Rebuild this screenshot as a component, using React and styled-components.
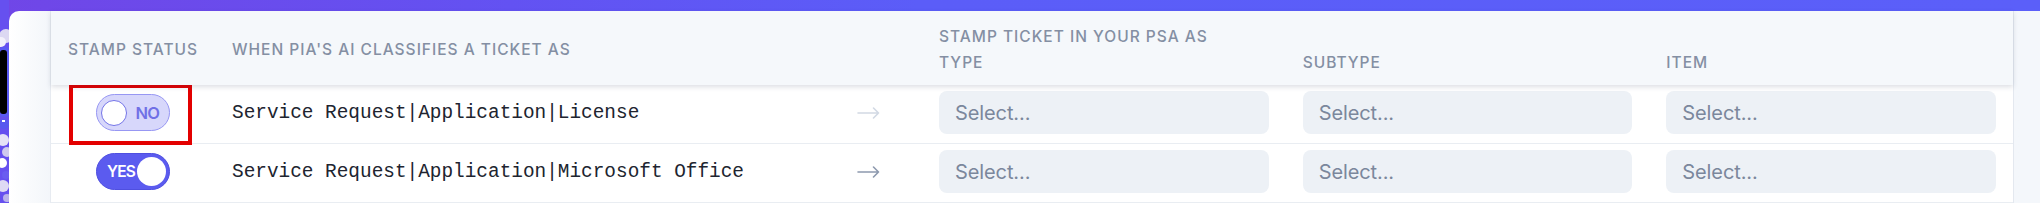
import React from 'react'
import styled, { createGlobalStyle } from 'styled-components'

const GlobalStyle = createGlobalStyle`
    html, body {
        margin: 0;
        padding: 0;
        background: #ffffff;
    }
    * {
        box-sizing: border-box;
    }
`

const Page = styled.div`
    display: flex;
    height: 203px;
    overflow: hidden;
    background: linear-gradient(90deg, #7046e7 0%, #6352f2 25%, #5b5df8 45%, #5b5ff9 100%);
`
const Art = styled.svg`
    flex-shrink: 0;
    width: 9px;
    height: 203px;
    display: block;
`
const Card = styled.div`
    flex: 1;
    display: flex;
    margin-top: 11px;
    padding: 0 26px 0 41px;
    border-top-left-radius: 10px;
    background: linear-gradient(90deg, #ffffff 0%, #f3f6fa 41px, #f4f7fb 100%);
`
const Table = styled.div`
    flex: 1;
    background: #ffffff;
    border-left: 1px solid #e7ebf1;
    border-right: 1px solid #e4e8ef;
    font-family: Inter, "Noto Sans", sans-serif;
`
const Columns = `
    display: grid;
    grid-template-columns: 164px 625px 82px repeat(3, 1fr);
`
const Header = styled.div`
    ${Columns}
    grid-template-rows: 26px 26px;
    height: 74px;
    padding: 12px 0 10px;
    background: #f5f8fb;
    position: relative;
    z-index: 1;
    box-shadow: 0 2px 5px rgba(40, 50, 80, 0.16);
`
const HeadCell = styled.div`
    grid-column: ${p => p.$col};
    grid-row: ${p => p.$row};
    align-self: center;
    padding-left: 17px;
    color: #848fa3;
    font-size: 15.5px;
    font-weight: 500;
    letter-spacing: 1px;
    text-transform: uppercase;
    white-space: nowrap;
`
const Row = styled.div`
    ${Columns}
    height: 59px;
    padding: 6px 0 9px;
    border-bottom: 1px solid #e9edf2;
    align-items: center;
`
const Cell = styled.div`
    position: relative;
    height: 100%;
    display: flex;
    align-items: center;
    padding: 0 17px;
    justify-content: ${p => (p.$center ? 'center' : 'flex-start')};
`
const Toggle = styled.div`
    width: 74px;
    height: 37px;
    border-radius: 19px;
    display: flex;
    align-items: center;
    justify-content: space-between;
    flex-direction: ${p => (p.$on ? 'row' : 'row-reverse')};
    padding: ${p => (p.$on ? '0 3px 0 10px' : '0 10px 0 4px')};
    background: ${p => (p.$on ? '#5b5bef' : '#d7d7fb')};
    border: 1.5px solid ${p => (p.$on ? '#4f4fe0' : '#9797f3')};
    color: ${p => (p.$on ? '#ffffff' : '#7070e6')};
    font-size: ${p => (p.$on ? '15.5px' : '16.5px')};
    font-weight: 600;
    letter-spacing: -0.9px;
`
const Knob = styled.span`
    width: ${p => (p.$on ? '29px' : '26px')};
    height: ${p => (p.$on ? '29px' : '26px')};
    border-radius: 50%;
    background: #ffffff;
    border: ${p => (p.$on ? 'none' : '1.5px solid #7474e8')};
`
const Marker = styled.div`
    position: absolute;
    left: 18px;
    top: -7px;
    width: 123px;
    height: 61px;
    border: 4px solid #e30000;
    pointer-events: none;
`
const Category = styled.span`
    font-family: "Liberation Mono", "DejaVu Sans Mono", monospace;
    font-size: 19.4px;
    color: #20242f;
    white-space: nowrap;
`
const Arrow = styled.svg`
    width: 23px;
    height: 12px;
    display: block;
    color: ${p => (p.$muted ? '#d2d9e4' : '#8d99ae')};
`
const Select = styled.div`
    width: 100%;
    height: 43px;
    border-radius: 8px;
    background: #edf1f6;
    display: flex;
    align-items: center;
    padding-left: 16px;
    color: #7b879c;
    font-size: 20px;
    letter-spacing: -0.1px;
`

const rows = [
    { on: false, label: 'Service Request|Application|License', marked: true },
    { on: true, label: 'Service Request|Application|Microsoft Office' },
]

const LeftArt = () => (
    <Art viewBox="0 0 9 203">
        <rect x="0" y="0" width="9" height="203" fill="#6650ef" />
        <circle cx="6" cy="36" r="7" fill="#dcd8f2" />
        <circle cx="1" cy="42" r="5" fill="#f3f1fb" />
        <rect x="0" y="47" width="9" height="70" rx="4" fill="#5a5af2" />
        <rect x="0" y="50" width="7" height="64" rx="3" fill="#000000" />
        <circle cx="4" cy="124" r="5" fill="#5858ef" />
        <rect x="2" y="120" width="3" height="2" fill="#ffffff" />
        <circle cx="3" cy="140" r="6" fill="#e6e3f6" />
        <circle cx="7" cy="152" r="5" fill="#cfcaee" />
        <circle cx="2" cy="163" r="5" fill="#ffffff" />
        <circle cx="6" cy="175" r="4" fill="#6a5cf0" />
        <circle cx="3" cy="186" r="6" fill="#dedaf4" />
        <circle cx="7" cy="198" r="4" fill="#b9b2ea" />
    </Art>
)

const ArrowIcon = ({ muted }) => (
    <Arrow $muted={muted} viewBox="0 0 23 12" fill="none" stroke="currentColor" strokeWidth="1.6" strokeLinecap="round" strokeLinejoin="round">
        <path d="M1 6H21.5M16.5 1L21.5 6L16.5 11" />
    </Arrow>
)

const App = () => {
    return (
        <>
            <GlobalStyle />
            <Page>
                <LeftArt />
                <Card>
                    <Table>
                        <Header>
                            <HeadCell $col="1" $row="1 / 3">Stamp Status</HeadCell>
                            <HeadCell $col="2" $row="1 / 3">When Pia's AI classifies a ticket as</HeadCell>
                            <HeadCell $col="4 / 7" $row="1">Stamp ticket in your PSA as</HeadCell>
                            <HeadCell $col="4" $row="2">Type</HeadCell>
                            <HeadCell $col="5" $row="2">Subtype</HeadCell>
                            <HeadCell $col="6" $row="2">Item</HeadCell>
                        </Header>
                        {rows.map(row => (
                            <Row key={row.label}>
                                <Cell $center>
                                    <Toggle $on={row.on}>
                                        <span>{row.on ? 'YES' : 'NO'}</span>
                                        <Knob $on={row.on} />
                                    </Toggle>
                                    {row.marked && <Marker />}
                                </Cell>
                                <Cell>
                                    <Category>{row.label}</Category>
                                </Cell>
                                <Cell>
                                    <ArrowIcon muted={!row.on} />
                                </Cell>
                                <Cell><Select>Select...</Select></Cell>
                                <Cell><Select>Select...</Select></Cell>
                                <Cell><Select>Select...</Select></Cell>
                            </Row>
                        ))}
                    </Table>
                </Card>
            </Page>
        </>
    )
}

export default App
